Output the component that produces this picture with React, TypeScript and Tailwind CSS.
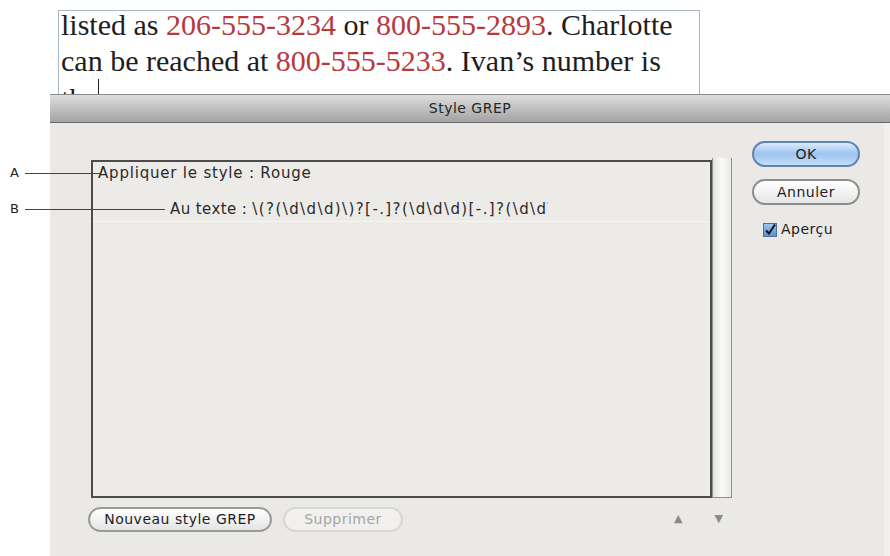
const ui = { fontFamily: '"DejaVu Sans", "Liberation Sans", sans-serif' };
const serif = { fontFamily: '"Liberation Serif", "Times New Roman", serif' };

function Callout({ label, top, length }: { label: string; top: number; length: number }) {
  return (
    <div className="absolute left-[10px] flex items-center" style={{ top: top - 9 }}>
      <span className="w-[15px] text-[13px] leading-[18px] text-[#222]" style={ui}>
        {label}
      </span>
      <span className="h-px bg-[#444]" style={{ width: length }} />
    </div>
  );
}

function PillButton({ children, className }: { children: React.ReactNode; className: string }) {
  return (
    <div
      className={
        "flex items-center justify-center rounded-full text-[14px] tracking-[0.5px] " + className
      }
      style={ui}
    >
      {children}
    </div>
  );
}

export default function App() {
  const red = "text-[#b8393d]";
  return (
    <div className="relative w-[890px] h-[556px] overflow-hidden bg-white">
      {/* text frame behind the dialog */}
      <div className="ml-[58px] mt-[10px] w-[642px] h-[84px] border-t border-x border-[#a9b7c6]">
        <p className="-mt-[4px] pl-[2px] text-[30px] leading-[36px] text-[#1e1e1e] whitespace-nowrap" style={serif}>
          listed as <span className={red}>206-555-3234</span> or{" "}
          <span className={red}>800-555-2893</span>. Charlotte
          <br />
          can be reached at <span className={red}>800-555-5233</span>. Ivan’s number is
          <br />
          the
          <span className="inline-block w-px h-[36px] bg-[#222] align-[-6px]" />
        </p>
      </div>

      {/* dialog */}
      <div className="relative ml-[50px] w-[840px]">
        <div className="h-[29px] flex items-center justify-center border-t border-[#8a8a8a] border-b border-b-[#6a6a6a] bg-gradient-to-b from-[#dedede] to-[#a3a3a3]">
          <span className="text-[14px] tracking-[0.5px] text-[#262626]" style={ui}>
            Style GREP
          </span>
        </div>

        <div className="h-[433px] flex bg-[#ebe9e6] border-r-[6px] border-[#f1f0ee]">
          {/* left column */}
          <div className="pl-[41px] pt-[35px] flex flex-col">
            <div className="flex w-[641px] h-[340px]">
              <div className="w-[621px] mt-[2px] border-2 border-[#4c4c4c] bg-[#edebe8] overflow-hidden">
                <div className="h-[22px] pl-[5px] flex items-center text-[15px] tracking-[0.8px] text-[#2a2a2a]" style={ui}>
                  Appliquer le style : Rouge
                </div>
                <div className="mt-[14px] h-[24px] border-b border-[#f7f6f4] flex items-center text-[15px] tracking-[0.4px] text-[#2a2a2a]" style={ui}>
                  <span className="ml-[77px] w-[378px] overflow-hidden whitespace-nowrap">
                    Au texte : <span className="tracking-[1.4px]">\(?(\d\d\d)\)?[-.]?(\d\d\d)[-.]?(\d\d\d\d)</span>
                  </span>
                </div>
              </div>
              <div className="w-[20px] border-x border-b border-[#8f8f8f] bg-gradient-to-r from-[#e2e2e2] via-[#fdfcfb] to-[#e6e6e6]" />
            </div>

            <div className="mt-[9px] flex items-center">
              <PillButton className="-ml-[3px] w-[184px] h-[25px] border-2 border-[#9a9a9a] bg-gradient-to-b from-white to-[#e4e4e4] text-[#1e1e1e]">
                Nouveau style GREP
              </PillButton>
              <PillButton className="ml-[11px] w-[120px] h-[25px] border-2 border-[#d6d6d6] bg-[#f1f0ee] text-[#a5a5a5]">
                Supprimer
              </PillButton>
              <div className="ml-auto mr-[9px] flex items-center gap-[32px] text-[11px] text-[#8a8a8a]" style={ui}>
                <span>▲</span>
                <span>▼</span>
              </div>
            </div>
          </div>

          {/* right column */}
          <div className="ml-[20px] pt-[18px] flex flex-col">
            <PillButton className="w-[108px] h-[26px] border-2 border-[#5f84b3] bg-gradient-to-b from-[#dcebfb] via-[#9cc3ef] to-[#c6ddf7] text-[#1e1e1e]">
              OK
            </PillButton>
            <PillButton className="mt-[12px] w-[108px] h-[26px] border-2 border-[#8e8e8e] bg-gradient-to-b from-white to-[#e6e6e6] text-[#1e1e1e]">
              Annuler
            </PillButton>
            <div className="mt-[14px] ml-[11px] flex items-center gap-[4px]">
              <span className="w-[14px] h-[14px] flex items-center justify-center border border-[#4d6f9e] bg-gradient-to-b from-[#9fc3ec] to-[#5d8fcf]">
                <svg width="12" height="12" viewBox="0 0 12 12">
                  <path d="M2 6.5 L5 9.5 L11 0.5" fill="none" stroke="#111" strokeWidth="2" />
                </svg>
              </span>
              <span className="text-[14px] tracking-[0.5px] text-[#1e1e1e]" style={ui}>
                Aperçu
              </span>
            </div>
          </div>
        </div>
      </div>

      <Callout label="A" top={173} length={75} />
      <Callout label="B" top={209} length={140} />
    </div>
  );
}
